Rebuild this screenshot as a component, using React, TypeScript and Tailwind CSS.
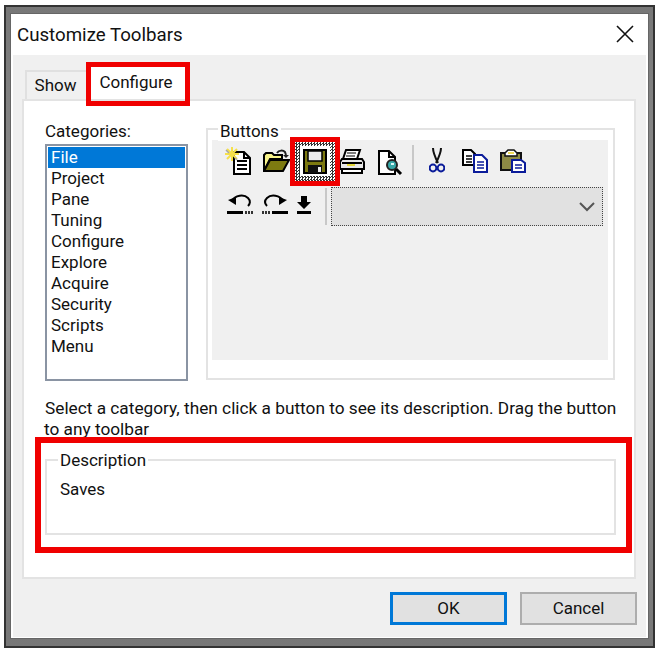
const font = "font-['Roboto',sans-serif] text-[17px] text-[#111]";

const categories = ['File', 'Project', 'Pane', 'Tuning', 'Configure', 'Explore', 'Acquire', 'Security', 'Scripts', 'Menu'];

const NewIcon = () => (
  <svg width="28" height="30" viewBox="0 0 28 30" className="ml-[13px] mt-[6px] shrink-0">
    <path d="M9 6h10l6 6v16H9z" fill="#fff" stroke="#000" strokeWidth="2" />
    <path d="M19 6v6h6" fill="none" stroke="#000" strokeWidth="2" />
    <path d="M12 15h10M12 19h10M12 23h10" stroke="#000" strokeWidth="2" />
    <path d="M7 1v14M0 8h14M2 3l10 10M12 3L2 13" stroke="#f5e04a" strokeWidth="2" />
    <path d="M1 4l3 3M10 12l2 2" stroke="#a8a8a8" strokeWidth="1.5" />
  </svg>
);

const OpenIcon = () => (
  <svg width="27" height="24" viewBox="0 0 27 24" className="ml-[10px] mt-[9px] shrink-0">
    <path d="M1 22V6l2-2h6l2 2h8v4H7L1 22z" fill="#f7f38a" stroke="#000" strokeWidth="2" />
    <path d="M1 22l6-11h19l-6 11z" fill="#7d7a10" stroke="#000" strokeWidth="2" />
    <path d="M14 4c2-3 6-3 8-1l1 3" fill="none" stroke="#222" strokeWidth="2" />
    <path d="M20 6h6l-3 3z" fill="#222" />
  </svg>
);

const SaveIcon = () => (
  <div className="ml-[5px] mt-[1px] flex h-[40px] w-[40px] shrink-0 items-center justify-center bg-[repeating-conic-gradient(#333_0_25%,#fff_0_50%)] bg-[length:3px_3px]">
    <div className="flex h-[30px] w-[30px] items-center justify-center bg-white">
      <svg width="24" height="25" viewBox="0 0 24 25">
        <path d="M1 1h22v23H1z" fill="#7d7a10" stroke="#000" strokeWidth="2" />
        <path d="M5 2h14v10H5z" fill="#ececec" stroke="#000" strokeWidth="1.5" />
        <path d="M5 16h14v8H5z" fill="#111" />
        <path d="M15 18h3v5h-3z" fill="#eee" />
      </svg>
    </div>
  </div>
);

const PrintIcon = () => (
  <svg width="26" height="26" viewBox="0 0 26 26" className="ml-[4px] mt-[9px] shrink-0">
    <path d="M7 1h14l-3 9H4z" fill="#fff" stroke="#000" strokeWidth="2" />
    <path d="M8 4h9M7 7h9" stroke="#000" strokeWidth="1.2" />
    <path d="M3 10h20l2 3v7H1v-7z" fill="#e8e8e8" stroke="#000" strokeWidth="2" />
    <path d="M3 14h20" stroke="#000" strokeWidth="2" />
    <path d="M8 15h8v2H8z" fill="#e6d93c" />
    <path d="M3 20h20v4H3z" fill="#fff" stroke="#000" strokeWidth="2" />
  </svg>
);

const PreviewIcon = () => (
  <svg width="26" height="26" viewBox="0 0 26 26" className="ml-[12px] mt-[10px] shrink-0">
    <path d="M2 1h10l6 6v17H2z" fill="#fff" stroke="#000" strokeWidth="2" />
    <path d="M12 1v6h6" fill="none" stroke="#000" strokeWidth="2" />
    <circle cx="15" cy="15" r="5" fill="#35a7a7" stroke="#222" strokeWidth="2" />
    <path d="M14 13h3v2h-3z" fill="#d8f4f4" />
    <path d="M19 19l5 5" stroke="#000" strokeWidth="3" />
  </svg>
);

const CutIcon = () => (
  <svg width="16" height="25" viewBox="0 0 16 25" className="ml-[15px] mt-[8px] shrink-0">
    <path d="M4 0c0 5 2 9 5 15M12 0c0 5-2 9-5 15" stroke="#111" strokeWidth="2" fill="none" />
    <circle cx="4" cy="20" r="3.4" fill="none" stroke="#0b1c9a" strokeWidth="2" />
    <circle cx="12" cy="20" r="3.4" fill="none" stroke="#0b1c9a" strokeWidth="2" />
  </svg>
);

const CopyIcon = () => (
  <svg width="26" height="24" viewBox="0 0 26 24" className="ml-[17px] mt-[9px] shrink-0">
    <path d="M1 1h8l4 4v11H1z" fill="#fff" stroke="#000" strokeWidth="2" />
    <path d="M4 7h6M4 10h6M4 13h6" stroke="#000" strokeWidth="1.5" />
    <path d="M12 6h8l5 5v12H12z" fill="#fff" stroke="#0b1c9a" strokeWidth="2" />
    <path d="M15 13h7M15 16h7M15 19h7" stroke="#0b1c9a" strokeWidth="1.5" />
  </svg>
);

const PasteIcon = () => (
  <svg width="26" height="24" viewBox="0 0 26 24" className="ml-[12px] mt-[9px] shrink-0">
    <path d="M1 4h20v17H1z" fill="#8d8a45" stroke="#111" strokeWidth="2" />
    <path d="M5 4l3-3h6l3 3v3H5z" fill="#fff" stroke="#111" strokeWidth="1.5" />
    <path d="M8 3h6v2H8z" fill="#f0dc55" />
    <path d="M12 11h9l4 3v9H12z" fill="#fff" stroke="#0b1c9a" strokeWidth="2" />
    <path d="M15 16h7M15 19h7" stroke="#0b1c9a" strokeWidth="1.5" />
  </svg>
);

const UndoIcon = () => (
  <svg width="26" height="22" viewBox="0 0 26 22" className="ml-[15px] mt-[6px] shrink-0">
    <path d="M5 8C8 2 17 1 21 5c3 3 2 6 0 8" fill="none" stroke="#000" strokeWidth="2" />
    <path d="M1 7l8-3v8z" fill="#000" />
    <path d="M0 18h16v3H0z" fill="#000" />
    <path d="M18 18h2v3h-2zM21 18h2v3h-2zM24 18h2v3h-2z" fill="#333" />
  </svg>
);

const RedoIcon = () => (
  <svg width="26" height="22" viewBox="0 0 26 22" className="ml-[9px] mt-[6px] shrink-0">
    <path d="M21 8C18 2 9 1 5 5c-3 3-2 6 0 8" fill="none" stroke="#000" strokeWidth="2" />
    <path d="M25 7l-8-3v8z" fill="#000" />
    <path d="M10 18h16v3H10z" fill="#000" />
    <path d="M0 18h2v3H0zM3 18h2v3H3zM6 18h2v3H6z" fill="#333" />
  </svg>
);

const DownIcon = () => (
  <svg width="14" height="18" viewBox="0 0 14 18" className="ml-[9px] mt-[9px] shrink-0">
    <path d="M4 0h6v6h4l-7 7-7-7h4z" fill="#000" />
    <path d="M0 15h14v3H0z" fill="#000" />
  </svg>
);

const CloseIcon = () => (
  <svg width="18" height="18" viewBox="0 0 18 18" className="-mt-[2px]">
    <path d="M1 1l16 16M17 1L1 17" stroke="#111" strokeWidth="1.6" />
  </svg>
);

const RedBox = ({ className }: { className: string }) => (
  <div className={`absolute border-[#f00000] ${className}`} />
);

const Toolbars = () => (
  <div className="ml-[4px] mt-[10px] h-[220px] w-[396px] bg-[#f0f0f0]">
    <div className="flex h-[47px] items-start">
      <NewIcon />
      <OpenIcon />
      <SaveIcon />
      <PrintIcon />
      <PreviewIcon />
      <div className="ml-[9px] mt-[5px] h-[35px] w-[2px] shrink-0 bg-[#c8c8c8]" />
      <CutIcon />
      <CopyIcon />
      <PasteIcon />
    </div>
    <div className="flex items-start">
      <UndoIcon />
      <RedoIcon />
      <DownIcon />
      <div className="ml-[14px] mt-[1px] h-[37px] w-[2px] shrink-0 bg-[#c8c8c8]" />
      <div className="ml-[4px] flex h-[39px] w-[272px] shrink-0 items-center justify-end border border-dotted border-[#444] bg-[#e1e1e1] pr-[6px]">
        <svg width="18" height="10" viewBox="0 0 18 10">
          <path d="M2 1l7 7 7-7" fill="none" stroke="#555" strokeWidth="2" />
        </svg>
      </div>
    </div>
  </div>
);

export default function App() {
  return (
    <div className={`relative h-[656px] w-[661px] overflow-hidden bg-white pl-[4px] pt-[5px] ${font}`}>
      <div className="h-[643px] w-[651px] border-2 border-[#333] bg-gradient-to-b from-[#777] via-[#9a9a9a] to-[#777] pl-[5px] pt-[7px]">
        <div className="flex h-[624px] w-[637px] flex-col bg-white shadow-[0_0_0_1px_#666]">
          <div className="flex h-[41px] shrink-0 items-center justify-between pl-[6px] pr-[14px] pt-[1px] text-[18.7px]">
            <span>Customize Toolbars</span>
            <CloseIcon />
          </div>
          <div className="mx-[2px] mb-[1px] flex flex-1 flex-col bg-[#f0f0f0] pl-[9px] pr-[10px]">
            <div className="flex h-[44px] shrink-0 items-end pl-[3px]">
              <div className="flex h-[29px] w-[61px] items-center justify-center border-l-2 border-t-2 border-[#e0e0e0] pr-[2px] pt-[1px]">Show</div>
              <div className="flex h-[37px] w-[104px] items-center justify-center bg-white pr-[4px] pt-[4px]">Configure</div>
            </div>
            <div className="h-[480px] shrink-0 border-2 border-[#e3e3e3] bg-white pl-[21px] pt-[20px]">
              <div className="flex items-start">
                <div className="w-[143px] shrink-0">
                  <div className="h-[23px] leading-[20px]">Categories:</div>
                  <div className="h-[237px] border-2 border-[#8a94a3] p-[1px]">
                    {categories.map((name, i) => (
                      <div
                        key={name}
                        className={i === 0 ? 'h-[21px] bg-[#0078d7] pl-[3px] leading-[21px] text-white' : 'h-[21px] pl-[3px] leading-[21px]'}
                      >
                        {name}
                      </div>
                    ))}
                  </div>
                </div>
                <div className="relative ml-[18px] mt-[7px] h-[252px] w-[409px] shrink-0 border-2 border-[#e3e3e3] bg-white">
                  <span className="absolute left-[10px] top-[-9px] bg-white px-[2px] leading-[20px]">Buttons</span>
                  <Toolbars />
                </div>
              </div>
              <p className="mt-[17px] w-[580px] text-[17.25px] leading-[21px]">
                Select a category, then click a button to see its description. Drag the button
                <br />
                <span className="ml-[-1px]">to any toolbar</span>
              </p>
              <div className="relative mt-[19px] h-[76px] w-[571px] border-2 border-[#e3e3e3]">
                <span className="absolute left-[11px] top-[-11px] bg-white px-[2px] leading-[20px]">Description</span>
                <div className="pl-[13px] pt-[18px] leading-[20px]">Saves</div>
              </div>
            </div>
            <div className="-mr-[1px] mt-[13px] flex justify-end gap-[13px]">
              <button className="h-[33px] w-[117px] border-[3px] border-[#0078d7] bg-[#e1e1e1]">OK</button>
              <button className="h-[33px] w-[117px] border-2 border-[#adadad] bg-[#e1e1e1]">Cancel</button>
            </div>
          </div>
        </div>
      </div>
      <RedBox className="left-[86px] top-[62px] h-[44px] w-[104px] border-[5px]" />
      <RedBox className="left-[290px] top-[137px] h-[49px] w-[50px] border-[5px]" />
      <RedBox className="left-[35px] top-[437px] h-[116px] w-[597px] border-[6px]" />
    </div>
  );
}
